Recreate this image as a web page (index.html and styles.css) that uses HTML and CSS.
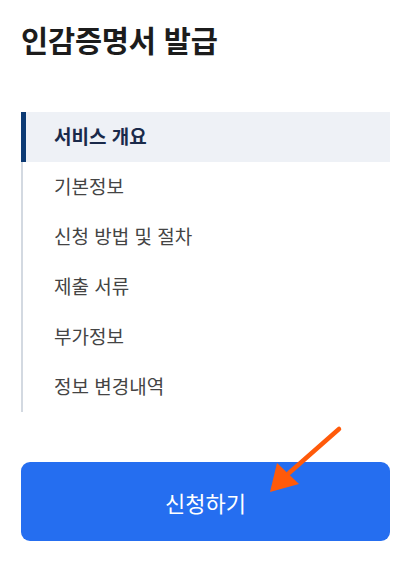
FILE: index.html
```html
<!DOCTYPE html>
<html lang="ko">
<head>
<meta charset="utf-8">
<link rel="stylesheet" href="styles.css">
</head>
<body>
<div class="page">
  <h1 class="title">인감증명서 발급</h1>
  <nav class="toc">
    <a class="toc-item active">서비스 개요</a>
    <a class="toc-item">기본정보</a>
    <a class="toc-item">신청 방법 및 절차</a>
    <a class="toc-item">제출 서류</a>
    <a class="toc-item">부가정보</a>
    <a class="toc-item">정보 변경내역</a>
  </nav>
  <div class="action">
    <button class="apply-btn">신청하기</button>
    <svg class="arrow" width="90" height="80" viewBox="0 0 90 80">
      <line x1="78" y1="8" x2="28" y2="52" stroke="#ff5a0a" stroke-width="4.5" stroke-linecap="round"/>
      <polygon points="9,71 16,42 38,63" fill="#ff5a0a"/>
    </svg>
  </div>
</div>
</body>
</html>
```

FILE: styles.css
```css
* { box-sizing: border-box; }
html, body { margin: 0; padding: 0; background: #fff; }
body {
  font-family: "Noto Sans CJK KR", "Noto Sans", sans-serif;
  color: #222;
}
.page {
  padding: 18px 18px 0 21px;
}
.title {
  margin: 0;
  font-size: 29.5px;
  font-weight: 700;
  line-height: 42px;
  color: #1c1c1c;
  letter-spacing: -0.2px;
}
.toc {
  margin-top: 52px;
  display: flex;
  flex-direction: column;
  border-left: 2px solid #d3d9e1;
}
.toc-item {
  display: block;
  height: 50px;
  line-height: 48px;
  padding-left: 31px;
  font-size: 19px;
  color: #444;
  letter-spacing: 0;
}
.toc-item.active {
  margin-left: -2px;
  border-left: 5px solid #0c3a74;
  padding-left: 28px;
  background: #eef1f6;
  color: #1a2a4a;
  font-weight: 700;
}
.action {
  position: relative;
  margin-top: 50px;
}
.apply-btn {
  display: block;
  width: 100%;
  height: 79px;
  border: none;
  border-radius: 9px;
  background: #256ef0;
  color: #fff;
  font-family: "Noto Sans CJK KR", "Noto Sans", sans-serif;
  font-size: 22px;
  font-weight: 400;
  padding-top: 2px;
}
.arrow {
  position: absolute;
  left: 240px;
  top: -41px;
}
```
